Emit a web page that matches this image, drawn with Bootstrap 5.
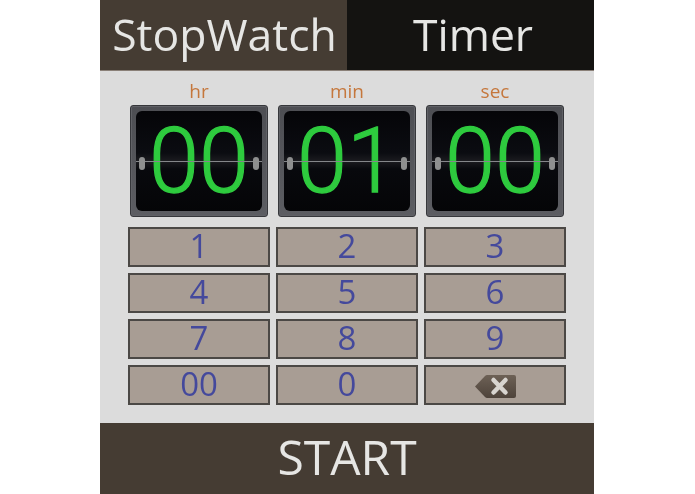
<!DOCTYPE html>
<html lang="en">
<head>
<meta charset="utf-8">
<title>Timer</title>
<link href="https://cdn.jsdelivr.net/npm/bootstrap@5.3.0/dist/css/bootstrap.min.css" rel="stylesheet">
<style>
html,body{margin:0;height:494px;overflow:hidden;background:#fff}
.phone{width:494px;height:494px;margin-left:100px;background:#dcdcdc;font-family:"Open Sans","Noto Sans",sans-serif;filter:blur(.45px)}
.tabs{height:71px;background:#141311;border-bottom:1px solid #8a8078}
.tab-item{height:70px;font-size:44.5px;line-height:68px;color:#e6e6e4;text-align:center;flex:1 1 0}
.tab-plain{padding-left:5px}
.tab-on{background:#453c33;flex:0 0 247px;padding-left:2px}
.main-area{height:352px;padding:8px 28px 0 28px}
.unit-row{height:26px;padding:0 2px}
.unit{flex:0 0 138px;margin-right:10px;text-align:center;color:#c5773c;font-size:19px;line-height:24px}
.unit:last-child{margin-right:0}
.flip-row{gap:10px;padding:0 2px}
.flip{position:relative;width:138px;height:112px;background:linear-gradient(#4d4e53,#5c5d62);border:1px solid #36373b;border-radius:3px;padding:5px;box-shadow:inset 0 0 0 1px #606166}
.flip-face{position:relative;height:100%;padding-top:2px;border-radius:6px;background:linear-gradient(#050508 0,#0b0c11 42%,#1b1b1f 50%,#08090d 58%,#050507 100%);color:#2ecb3e;font-family:Roboto,"Liberation Sans",sans-serif;font-weight:300;font-size:90px;line-height:98px;text-align:center;-webkit-text-stroke:1.3px #2ecb3e}
.flip-face::after{content:"";position:absolute;left:0;right:0;top:50%;height:1px;background:#85878a}
.pin{position:absolute;top:46px;width:6px;height:13px;border-radius:3px;background:#8e8f8f;z-index:1}
.pin-l{left:3px}
.pin-r{right:3px}
.keys{display:grid;grid-template-columns:repeat(3,142px);grid-auto-rows:40px;gap:6px;margin-top:10px}
.keypad-btn{background:#a89d94;border:2px solid #4b4845;border-radius:0;color:#44499c;font-size:33px;line-height:33px;text-align:center;padding:0 0 3px}
.back-icon{display:block;width:41px;height:23px;margin:6px auto 0 49px}
.foot{height:71px;background:#453c33;color:#e6e6e4;font-size:48px;line-height:68px;text-align:center}
</style>
</head>
<body>
<div class="phone d-flex flex-column">
  <div class="tabs d-flex">
    <div class="tab-item tab-on">StopWatch</div>
    <div class="tab-item tab-plain">Timer</div>
  </div>
  <div class="main-area">
    <div class="unit-row d-flex">
      <div class="unit">hr</div><div class="unit">min</div><div class="unit">sec</div>
    </div>
    <div class="flip-row d-flex">
      <div class="flip"><div class="flip-face"><span class="pin pin-l"></span>00<span class="pin pin-r"></span></div></div>
      <div class="flip"><div class="flip-face"><span class="pin pin-l"></span>01<span class="pin pin-r"></span></div></div>
      <div class="flip"><div class="flip-face"><span class="pin pin-l"></span>00<span class="pin pin-r"></span></div></div>
    </div>
    <div class="keys">
      <button class="keypad-btn" type="button">1</button>
      <button class="keypad-btn" type="button">2</button>
      <button class="keypad-btn" type="button">3</button>
      <button class="keypad-btn" type="button">4</button>
      <button class="keypad-btn" type="button">5</button>
      <button class="keypad-btn" type="button">6</button>
      <button class="keypad-btn" type="button">7</button>
      <button class="keypad-btn" type="button">8</button>
      <button class="keypad-btn" type="button">9</button>
      <button class="keypad-btn" type="button">00</button>
      <button class="keypad-btn" type="button">0</button>
      <button class="keypad-btn" type="button" aria-label="Backspace"><svg class="back-icon" viewBox="0 0 41 23"><defs><linearGradient id="bk" x1="0" y1="0" x2="0" y2="1"><stop offset="0" stop-color="#6d6156"/><stop offset="1" stop-color="#4e433a"/></linearGradient></defs><path d="M0 11.5 L10 1 Q11 0 12 0 H39 Q41 0 41 2 V21 Q41 23 39 23 H12 Q11 23 10 22 Z" fill="url(#bk)"/><path d="M18.500 5 L30.500 17.500 M30.500 5 L18.500 17.500" stroke="#d8d4cf" stroke-width="4.500" stroke-linecap="round"/></svg></button>
    </div>
  </div>
  <div class="foot">START</div>
</div>
<script src="https://cdn.jsdelivr.net/npm/bootstrap@5.3.0/dist/js/bootstrap.bundle.min.js"></script>
</body>
</html>
